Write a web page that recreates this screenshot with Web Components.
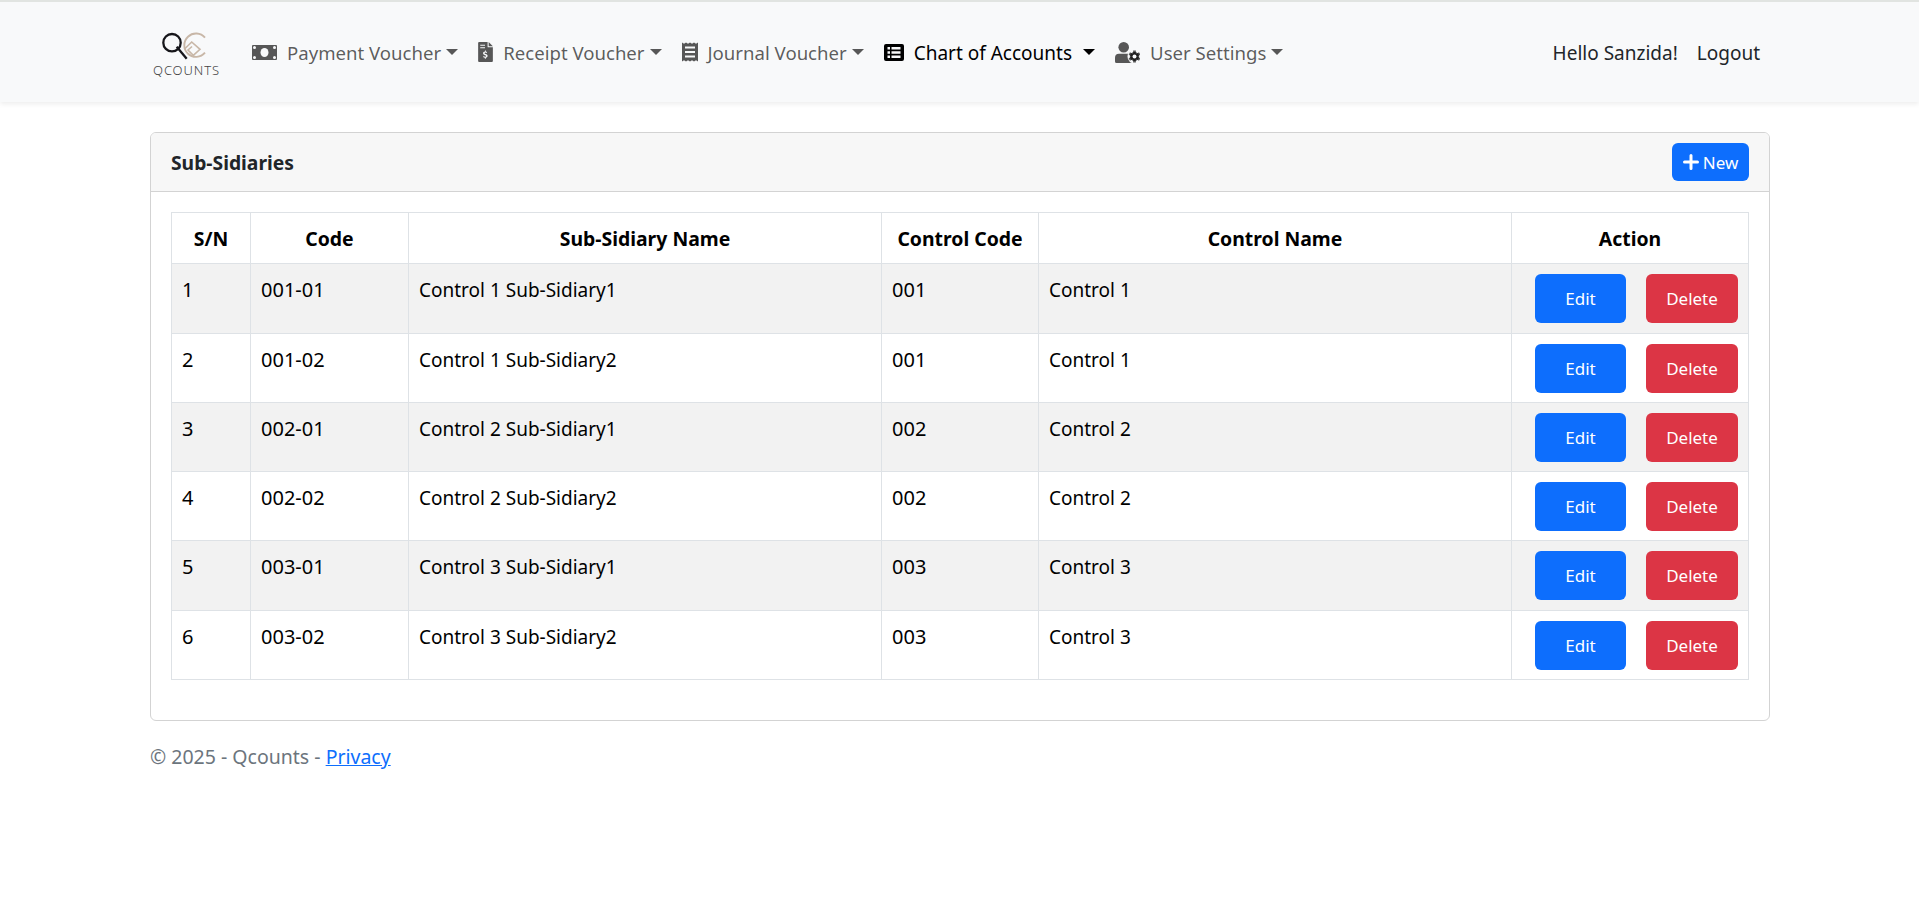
<!DOCTYPE html>
<html lang="en">
<head>
<meta charset="utf-8">
<title>Sub-Sidiaries - Qcounts</title>
<style>
  html, body { margin: 0; padding: 0; background: #fff; }
  body { font-family: "Noto Sans", "Open Sans", sans-serif; font-size: 19px; color: #212529; }
  main { display: block; width: 1620px; margin: 0 auto 0 150px; padding-top: 30px; }
</style>
</head>
<body>
<app-navbar></app-navbar>
<main>
  <app-card heading="Sub-Sidiaries">
    <app-button slot="action" variant="new"><svg slot="icon" width="16" height="16" viewBox="0 0 16 16"><path fill="#fff" d="M6.5 1.5a1.5 1.5 0 0 1 3 0V6.500h5a1.500 1.500 0 0 1 0 3h-5v5a1.500 1.500 0 0 1-3 0v-5h-5a1.500 1.500 0 0 1 0-3h5z"/></svg>New</app-button>
    <subsidiary-table></subsidiary-table>
  </app-card>
  <app-footer></app-footer>
</main>

<script>
const NAV_BG = "#f8f9fa";
const ICONS = {
  money: `<svg width="25" height="15" viewBox="0 0 25 15"><rect width="25" height="15" rx="1" fill="currentColor"/><g fill="${NAV_BG}"><ellipse cx="12.500" cy="7.500" rx="4" ry="4.500"/><circle cx="2.500" cy="2.500" r="1.500"/><circle cx="22.500" cy="2.500" r="1.500"/><circle cx="2.500" cy="12.500" r="1.500"/><circle cx="22.500" cy="12.500" r="1.500"/></g></svg>`,
  invoice: `<svg width="15" height="20" viewBox="0 0 14 19"><path fill-rule="evenodd" fill="currentColor" d="M1 0h8v4.500a.5.5 0 0 0 .5.5H14v13a1 1 0 0 1-1 1H1a1 1 0 0 1-1-1V1a1 1 0 0 1 1-1zM10 0l4 4h-4zM2 2.500v1h4.500v-1zM2 5v1h4.500V5zM7.400 8h-.9v1.100c-1.100.1-1.800.8-1.800 1.700 0 1 .8 1.400 1.700 1.700.8.200 1.200.4 1.200.8 0 .4-.4.600-.9.600-.5 0-1-.2-1.400-.5l-.6.800c.5.400 1.100.600 1.700.700V16h.9v-1.100c1.100-.2 1.700-.9 1.700-1.800 0-1-.8-1.500-1.700-1.800-.7-.2-1.200-.4-1.200-.7 0-.4.300-.6.800-.6.400 0 .9.200 1.200.4l.5-.8c-.4-.3-.9-.5-1.400-.6z"/></svg>`,
  receipt: `<svg width="16" height="20" viewBox="0 0 16 20"><path fill-rule="evenodd" fill="currentColor" d="M0 .5l2 1.200L4 .500l2 1.200L8 .5l2 1.200L12 .5l2 1.200L16 .5v19l-2-1.200-2 1.200-2-1.200-2 1.200-2-1.200-2 1.200-2-1.200-2 1.200zM3 4.500v2h10v-2zM3 9v2h10V9zM3 13.500v2h10v-2z"/></svg>`,
  list: `<svg width="20" height="17" viewBox="0 0 20 17"><path fill-rule="evenodd" fill="currentColor" d="M2 0h16a2 2 0 0 1 2 2v13a2 2 0 0 1-2 2H2a2 2 0 0 1-2-2V2a2 2 0 0 1 2-2zM3.500 3v2.500H6V3zM7.500 3v2.500h9V3zM3.500 7.200v2.600H6V7.200zM7.500 7.200v2.600h9V7.200zM3.500 11.500V14H6v-2.500zM7.500 11.500V14h9v-2.500z"/></svg>`,
  usercog: `<svg width="25" height="21" viewBox="0 0 25 21"><circle cx="8.700" cy="5.300" r="5.300" fill="currentColor"/><path fill="currentColor" d="M4 11.700h9.400a4 4 0 0 1 4 4V21H1.500A1.500 1.500 0 0 1 0 19.500V15.700a4 4 0 0 1 4-4z"/><circle cx="19.500" cy="14.500" r="7" fill="${NAV_BG}"/><g stroke="currentColor" stroke-width="2.800"><path d="M19.500 8.500v12M14.300 11.500l10.400 6M14.300 17.500l10.400-6"/></g><circle cx="19.500" cy="14.500" r="4.600" fill="currentColor"/><circle cx="19.500" cy="14.500" r="2" fill="${NAV_BG}"/></svg>`,
};

class AppBrand extends HTMLElement {
  constructor() {
    super();
    this.attachShadow({ mode: "open" }).innerHTML = `
      <style>
        :host { display: flex; flex-direction: column; align-items: center; width: 70px; padding-top: 4px; color: #444; }
        svg { display: block; }
        span { font-size: 13px; font-weight: 300; line-height: 13px; letter-spacing: .9px; margin-top: 4px; padding-left: 3px; white-space: nowrap; }
      </style>
      <svg width="50" height="28" viewBox="0 0 50 28" fill="none">
        <path stroke="#c8b7a7" stroke-width="1.900" d="M45 5.700A11.700 11.700 0 1 0 45 20.700"/>
        <path stroke="#c8b7a7" stroke-width="1.600" d="M24.300 17.300L31.700 10 40 17.300 33.300 23.300 28 18 32 14.500"/>
        <circle cx="12" cy="10.700" r="8.700" stroke="#16161a" stroke-width="2.300"/>
        <path stroke="#16161a" stroke-width="2.300" d="M16.700 14.700L26.700 26.700"/>
      </svg>
      <span>QCOUNTS</span>`;
  }
}

class NavItem extends HTMLElement {
  constructor() {
    super();
    const active = this.hasAttribute("active");
    this.attachShadow({ mode: "open" }).innerHTML = `
      <style>
        :host { display: flex; align-items: center; height: 40px; padding: 0 10px; white-space: nowrap;
                color: ${active ? "#000" : "rgba(0,0,0,.65)"}; }
        .icon { display: flex; align-items: center; margin-right: 10px; }
        svg { display: block; }
        .label { font-size: 18.600px; }
        :host([active]) .label { font-size: 19px; padding-top: 1px; }
        .caret { margin-left: var(--caret-gap, 5px); width: 0; height: 0;
                 border-top: 6px solid currentColor; border-left: 6px solid transparent; border-right: 6px solid transparent; }
      </style>
      <span class="icon">${ICONS[this.getAttribute("icon")] || ""}</span>
      <span class="label"><slot></slot></span>
      <span class="caret"></span>`;
  }
}

class AppNavbar extends HTMLElement {
  constructor() {
    super();
    this.attachShadow({ mode: "open" }).innerHTML = `
      <style>
        :host { display: block; border-top: 2px solid #e1e4e1; background: ${NAV_BG}; height: 100px;
                box-shadow: 0 2px 5px rgba(0,0,0,.075); position: relative; }
        .bar { display: flex; align-items: center; height: 100%; margin-left: 150px; width: 1620px; }
        nav { display: flex; align-items: center; margin-left: 32px; }
        .right { display: flex; margin-left: auto; padding: 1px 10px 0 0; color: #212529; gap: 19px; font-size: 19px; white-space: nowrap; }
        nav-item:first-child { padding-left: 0; }
        nav-item.chart { --caret-gap: 11px; }
      </style>
      <div class="bar">
        <app-brand></app-brand>
        <nav>
          <nav-item icon="money">Payment Voucher</nav-item>
          <nav-item icon="invoice">Receipt Voucher</nav-item>
          <nav-item icon="receipt">Journal Voucher</nav-item>
          <nav-item class="chart" icon="list" active>Chart of Accounts</nav-item>
          <nav-item icon="usercog">User Settings</nav-item>
        </nav>
        <div class="right"><span>Hello Sanzida!</span><span>Logout</span></div>
      </div>`;
  }
}

class AppButton extends HTMLElement {
  constructor() {
    super();
    const v = this.getAttribute("variant") || "edit";
    const sizes = {
      new: "width:77px;height:38px;background:#0d6efd;gap:4px;",
      edit: "width:91px;height:49px;background:#0d6efd;",
      delete: "width:92px;height:49px;background:#dc3545;",
    };
    this.attachShadow({ mode: "open" }).innerHTML = `
      <style>
        :host { display: inline-flex; align-items: center; justify-content: center; box-sizing: border-box;
                border-radius: 6px; color: #fff; font-size: 17px; font-weight: 400; ${sizes[v]} }
        ::slotted(svg) { display: block; }
      </style>
      <slot name="icon"></slot><slot></slot>`;
  }
}

class AppCard extends HTMLElement {
  constructor() {
    super();
    this.attachShadow({ mode: "open" }).innerHTML = `
      <style>
        :host { display: block; border: 1px solid #d3d3d3; border-radius: 6px; background: #fff; overflow: hidden; }
        header { display: flex; align-items: center; justify-content: space-between; box-sizing: border-box;
                 height: 59px; padding: 0 20px; background: #f7f7f7; border-bottom: 1px solid #d3d3d3; }
        h2 { margin: 0; font-size: 19.300px; font-weight: 700; color: #212529; }
        .body { padding: 20px 20px 40px; }
      </style>
      <header><h2>${this.getAttribute("heading")}</h2><slot name="action"></slot></header>
      <div class="body"><slot></slot></div>`;
  }
}

const ROWS = [
  ["1", "001-01", "Control 1 Sub-Sidiary1", "001", "Control 1"],
  ["2", "001-02", "Control 1 Sub-Sidiary2", "001", "Control 1"],
  ["3", "002-01", "Control 2 Sub-Sidiary1", "002", "Control 2"],
  ["4", "002-02", "Control 2 Sub-Sidiary2", "002", "Control 2"],
  ["5", "003-01", "Control 3 Sub-Sidiary1", "003", "Control 3"],
  ["6", "003-02", "Control 3 Sub-Sidiary2", "003", "Control 3"],
];

class SubsidiaryTable extends HTMLElement {
  constructor() {
    super();
    const heads = ["S/N", "Code", "Sub-Sidiary Name", "Control Code", "Control Name", "Action"];
    const rows = ROWS.map(r => `<tr>${r.map((c, i) => `<td class="${i === 2 || i === 4 ? "" : "num"}">${c}</td>`).join("")}
      <td class="act"><div><app-button variant="edit">Edit</app-button><app-button variant="delete">Delete</app-button></div></td></tr>`).join("");
    this.attachShadow({ mode: "open" }).innerHTML = `
      <style>
        :host { display: block; }
        table { width: 1577px; table-layout: fixed; border-collapse: collapse; color: #000; font-size: 19px; line-height: 24px; }
        th, td { border: 1px solid #dee2e6; padding: 8px 10px; text-align: left; vertical-align: top; box-sizing: border-box; }
        th { text-align: center; font-weight: 700; font-size: 19.400px; height: 51px; vertical-align: middle; padding: 2px 8px 0; }
        td { height: 69px; padding-top: 14px; }
        tbody tr:nth-child(4n+1) td { height: 70px; }
        td.num { font-size: 20px; }
        tbody tr:nth-child(odd) td { background: #f2f2f2; }
        td.act { padding: 10px 10px 0 0; }
        .act div { display: flex; justify-content: flex-end; gap: 20px; }
      </style>
      <table>
        <colgroup><col style="width:79px"><col style="width:158px"><col style="width:473px"><col style="width:157px"><col style="width:473px"><col style="width:237px"></colgroup>
        <thead><tr>${heads.map(h => `<th>${h}</th>`).join("")}</tr></thead>
        <tbody>${rows}</tbody>
      </table>`;
  }
}

class AppFooter extends HTMLElement {
  constructor() {
    super();
    this.attachShadow({ mode: "open" }).innerHTML = `
      <style>
        :host { display: block; margin-top: 24px; color: #6c757d; font-size: 19.500px; line-height: 24px; }
        a { color: #0d6efd; text-decoration: underline; }
      </style>
      &copy; 2025 - Qcounts - <a href="#">Privacy</a>`;
  }
}

customElements.define("app-brand", AppBrand);
customElements.define("nav-item", NavItem);
customElements.define("app-navbar", AppNavbar);
customElements.define("app-button", AppButton);
customElements.define("app-card", AppCard);
customElements.define("subsidiary-table", SubsidiaryTable);
customElements.define("app-footer", AppFooter);
</script>
</body>
</html>
